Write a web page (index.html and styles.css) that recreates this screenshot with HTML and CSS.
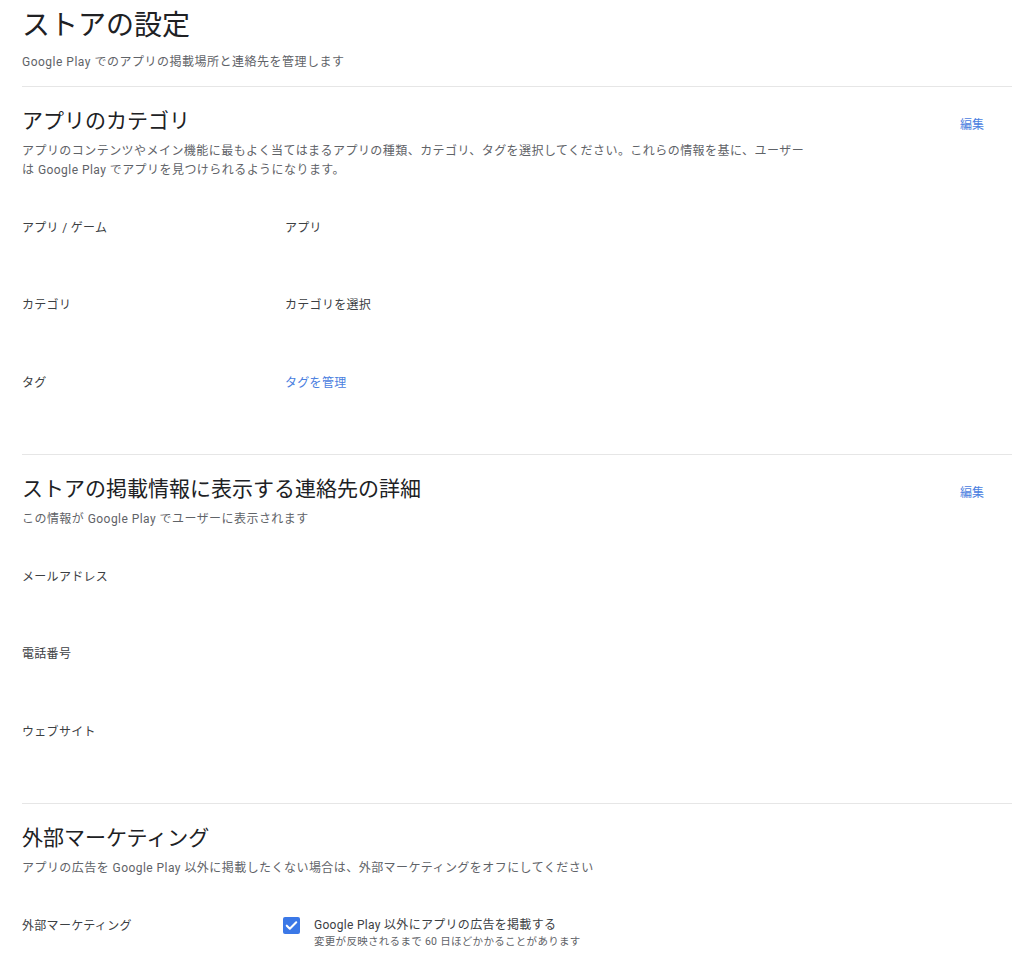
FILE: index.html
```html
<!DOCTYPE html>
<html lang="ja">
  <head>
    <meta charset="UTF-8" />
    <meta name="viewport" content="width=device-width, initial-scale=1.0" />
    <title>ストアの設定</title>
    <link rel="stylesheet" href="styles.css">
  </head>
  <body>
    <div class="page">
      <div class="page-header">
        <h1>ストアの設定</h1>
        <p class="page-sub">Google Play でのアプリの掲載場所と連絡先を管理します</p>
      </div>

      <div class="section">
        <div class="section-head">
          <h2>アプリのカテゴリ</h2>
          <a class="edit-link" href="#">編集</a>
        </div>
        <p class="section-desc">アプリのコンテンツやメイン機能に最もよく当てはまるアプリの種類、カテゴリ、タグを選択してください。これらの情報を基に、ユーザーは Google Play でアプリを見つけられるようになります。</p>
        <div class="rows">
          <div class="row">
            <div class="row-label">アプリ / ゲーム</div>
            <div class="row-value">アプリ</div>
          </div>
          <div class="row">
            <div class="row-label">カテゴリ</div>
            <div class="row-value">カテゴリを選択</div>
          </div>
          <div class="row">
            <div class="row-label">タグ</div>
            <div class="row-value"><a class="link" href="#">タグを管理</a></div>
          </div>
        </div>
      </div>

      <div class="section">
        <div class="section-head">
          <h2>ストアの掲載情報に表示する連絡先の詳細</h2>
          <a class="edit-link" href="#">編集</a>
        </div>
        <p class="section-desc">この情報が Google Play でユーザーに表示されます</p>
        <div class="rows">
          <div class="row">
            <div class="row-label">メールアドレス</div>
            <div class="row-value"></div>
          </div>
          <div class="row">
            <div class="row-label">電話番号</div>
            <div class="row-value"></div>
          </div>
          <div class="row">
            <div class="row-label">ウェブサイト</div>
            <div class="row-value"></div>
          </div>
        </div>
      </div>

      <div class="section last">
        <div class="section-head">
          <h2>外部マーケティング</h2>
        </div>
        <p class="section-desc">アプリの広告を Google Play 以外に掲載したくない場合は、外部マーケティングをオフにしてください</p>
        <div class="rows">
          <div class="row">
            <div class="row-label">外部マーケティング</div>
            <div class="row-value">
              <label class="check">
                <span class="check-box">
                  <svg viewBox="0 0 18 18" width="17" height="17">
                    <path d="M4 9.2l3.2 3.2L14 5.6" fill="none" stroke="#fff" stroke-width="2.2" stroke-linecap="round" stroke-linejoin="round" />
                  </svg>
                </span>
                <span class="check-text">
                  <span class="check-title">Google Play 以外にアプリの広告を掲載する</span>
                  <span class="check-hint">変更が反映されるまで 60 日ほどかかることがあります</span>
                </span>
              </label>
            </div>
          </div>
        </div>
      </div>
    </div>
  </body>
</html>
```

FILE: styles.css
```css
* {
  margin: 0;
  padding: 0;
  box-sizing: border-box;
  font-family: "Roboto", "Noto Sans CJK JP", sans-serif;
}

body {
  background-color: #fff;
  color: #3c4043;
}

.page {
  padding: 8px 12px 0 22px;
}

h1 {
  font-size: 28px;
  font-weight: 400;
  line-height: 36px;
  color: #202124;
}

.page-sub {
  margin-top: 9px;
  font-size: 12px;
  line-height: 18px;
  letter-spacing: 0.5px;
  color: #5f6368;
}

.page-header {
  padding-bottom: 15px;
  border-bottom: 1px solid #e6e6e6;
}

.section {
  padding-top: 19.5px;
  padding-bottom: 3px;
  border-bottom: 1px solid #e6e6e6;
}

.section.last {
  border-bottom: none;
}

.section-head {
  display: flex;
  justify-content: space-between;
  align-items: baseline;
  padding-right: 28px;
}

h2 {
  font-size: 21px;
  font-weight: 400;
  line-height: 28px;
  color: #202124;
}

.edit-link {
  font-size: 12px;
  color: #4a80e0;
  text-decoration: none;
  position: relative;
  top: 1px;
}

.section-desc {
  margin-top: 7px;
  max-width: 792px;
  font-size: 12px;
  line-height: 19px;
  letter-spacing: 0.45px;
  color: #5f6368;
}

.rows {
  margin-top: 39px;
}

.row {
  display: flex;
  min-height: 77.5px;
  font-size: 12px;
  line-height: 18px;
  letter-spacing: 0.3px;
  color: #3c4043;
}

.row-label {
  width: 263px;
  flex-shrink: 0;
}

.row-value {
  flex: 1;
}

.link {
  color: #4a80e0;
  text-decoration: none;
}

.check {
  display: flex;
  align-items: flex-start;
  gap: 14px;
  margin-left: -2px;
}

.check-box {
  display: flex;
  width: 17px;
  height: 17px;
  border-radius: 2px;
  background-color: #3b78e7;
}

.check-text {
  display: flex;
  flex-direction: column;
}

.check-title {
  font-size: 12px;
  line-height: 17px;
}

.check-hint {
  font-size: 10.5px;
  line-height: 16px;
  color: #5f6368;
}
```
